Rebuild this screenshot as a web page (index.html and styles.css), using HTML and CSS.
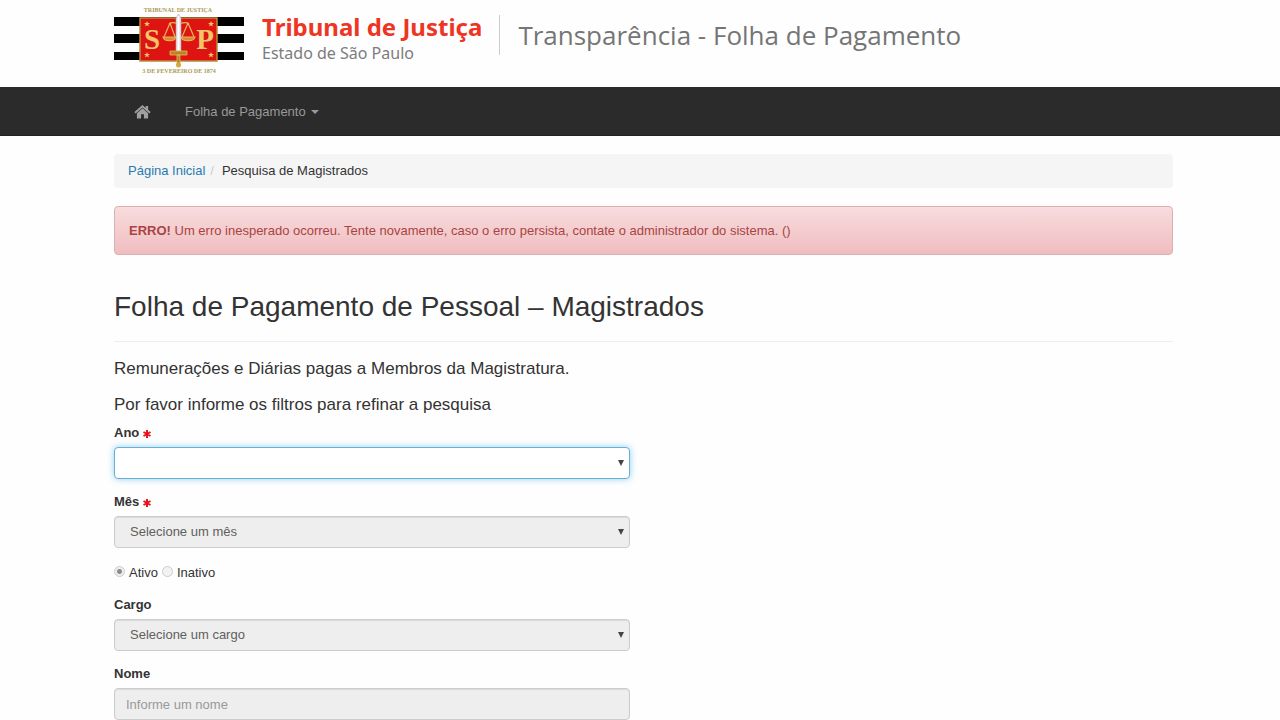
FILE: index.html
```html
<!DOCTYPE html>
<html lang="pt-BR">
<head>
<meta charset="utf-8">
<meta name="viewport" content="width=device-width, initial-scale=1">
<title>Transparência - Folha de Pagamento</title>
<link rel="stylesheet" href="styles.css">
</head>
<body>
<header class="masthead container">
  <svg class="crest" viewBox="0 0 130 72" role="img" aria-label="Tribunal de Justiça de São Paulo">
    <defs>
      <path id="star" d="M0-3 .8-.9 3-.9 1.200.5 1.900 2.600 0 1.300-1.900 2.600-1.200.5-3-.9-.8-.9z"/>
    </defs>
    <path d="M0 13h130v9H0zM0 30h130v9H0zM0 48h130v8H0z" fill="#000"/>
    <path d="M26 14h77v43H26z" fill="#dd1412" stroke="#b98a3c" stroke-width="1.500"/>
    <g fill="#f3c56a">
      <use href="#star" x="33" y="20"/><use href="#star" x="97" y="20"/>
      <use href="#star" x="33" y="51"/><use href="#star" x="97" y="51"/>
    </g>
    <g class="crest-letter" text-anchor="middle">
      <text x="38" y="45">S</text><text x="91" y="45">P</text>
    </g>
    <g fill="none" stroke="#e9b55c" stroke-width="1.200">
      <path d="M55 20c3-3 7 0 10-1 3 1 7-2 10 1M56 19l-6 14M56 19l5 14M74 19l-6 14M74 19l6 14"/>
      <path d="M49 33h13c-1 5-12 5-13 0zM67 33h14c-1 5-13 5-14 0z" fill="#d98a35"/>
    </g>
    <path d="M62 48V14l2.500-4 2.500 4v34z" fill="#e8e3e6" stroke="#b9a6a8" stroke-width=".6"/>
    <path d="M64.500 12v34" stroke="#fff" stroke-width="1.500"/>
    <path d="M56 47h17v4H56zM63 51h3v10h-3z" fill="#b98425" stroke="#e0b75a" stroke-width=".8"/>
    <circle cx="64.500" cy="61" r="2.500" fill="#d5a73f"/>
    <g class="crest-motto" text-anchor="middle">
      <text x="64" y="8">TRIBUNAL DE JUSTIÇA</text>
      <text x="65" y="69">3 DE FEVEREIRO DE 1874</text>
    </g>
  </svg>
  <div class="brand">
    <strong class="brand-name">Tribunal de Justiça</strong>
    <span class="brand-state">Estado de São Paulo</span>
  </div>
  <div class="system-name">Transparência - Folha de Pagamento</div>
</header>

<nav class="navbar" aria-label="Principal">
  <div class="container navbar-items">
    <a class="nav-link" href="#" aria-label="Página Inicial">
      <svg class="home-icon" viewBox="0 0 18 15" aria-hidden="true">
        <path d="M9 0 .3 7.600 1.600 9 9 2.600 16.400 9l1.300-1.400-2.700-2.400V1.200h-2.600v1.900z"/>
        <path d="M9 3.600 3 8.800V14.500h4.500V10h3v4.500H15V8.800z"/>
      </svg>
    </a>
    <button class="nav-link" type="button" aria-haspopup="true">Folha de Pagamento <span class="caret"></span></button>
  </div>
</nav>

<main class="container content">
  <ol class="breadcrumb">
    <li><a href="#">Página Inicial</a></li>
    <li>Pesquisa de Magistrados</li>
  </ol>
  <div class="alert" role="alert"><strong>ERRO!</strong> Um erro inesperado ocorreu. Tente novamente, caso o erro persista, contate o administrador do sistema. ()</div>
  <h1 class="page-title">Folha de Pagamento de Pessoal – Magistrados</h1>
  <p class="lead">Remunerações e Diárias pagas a Membros da Magistratura.</p>
  <p class="lead">Por favor informe os filtros para refinar a pesquisa</p>

  <form class="filters">
    <div class="field">
      <label for="ano">Ano <svg class="required" viewBox="0 0 8 8" aria-hidden="true"><path d="M4 0v8M.5 2l7 4M7.500 2l-7 4"/></svg></label>
      <div class="select-box"><select class="control focused" id="ano" required><option></option></select></div>
    </div>
    <div class="field">
      <label for="mes">Mês <svg class="required" viewBox="0 0 8 8" aria-hidden="true"><path d="M4 0v8M.5 2l7 4M7.500 2l-7 4"/></svg></label>
      <div class="select-box"><select class="control" id="mes" disabled><option>Selecione um mês</option></select></div>
    </div>
    <div class="status">
      <input type="radio" name="status" id="ativo" checked disabled><label for="ativo">Ativo</label>
      <input type="radio" name="status" id="inativo" disabled><label for="inativo">Inativo</label>
    </div>
    <div class="field">
      <label for="cargo">Cargo</label>
      <div class="select-box"><select class="control" id="cargo" disabled><option>Selecione um cargo</option></select></div>
    </div>
    <div class="field">
      <label for="nome">Nome</label>
      <input class="control" id="nome" type="text" placeholder="Informe um nome" disabled>
    </div>
  </form>
</main>
</body>
</html>
```
FILE: styles.css
```css
* { box-sizing: border-box; }

body {
  margin: 0;
  background: #fefefe;
  color: #333;
  font: 13px/18px "Liberation Sans", Arial, sans-serif;
}

.container { padding: 0 107px 0 114px; }

/* Header */
.masthead {
  display: flex;
  align-items: flex-start;
  padding-top: 4px;
  height: 87px;
}
.crest { width: 130px; height: 72px; flex: none; }
.crest-letter {
  font: bold 29px "Liberation Serif", serif;
  fill: #f3c56a;
}
.crest-motto {
  font: bold 6px "Liberation Serif", serif;
  fill: #a99a55;
}
.brand {
  display: flex;
  flex-direction: column;
  margin-left: 18px;
  padding-top: 8px;
  font-family: "Noto Sans", sans-serif;
}
.brand-name { color: #ee3524; font-size: 24px; line-height: 30px; }
.brand-state { color: #7c7c7c; font-size: 16px; line-height: 22px; }
.system-name {
  margin: 11px 0 0 17px;
  padding-left: 18px;
  border-left: 1px solid #ccc;
  color: #757575;
  font: 26px/40px "Open Sans", sans-serif;
}

/* Navigation */
.navbar { background: #2b2b2b; border-bottom: 1px solid #222; }
.navbar-items { display: flex; gap: 34px; align-items: center; height: 48px; padding-top: 2px; padding-left: 134px; }
.nav-link {
  display: flex;
  align-items: center;
  gap: 5px;
  padding: 0;
  border: 0;
  background: none;
  color: #999;
  font: inherit;
}
.home-icon { width: 17px; height: 14px; fill: #a0a0a0; }
.caret {
  border: 4px solid transparent;
  border-top-color: currentColor;
  border-bottom: 0;
}

/* Content */
.content { padding-top: 18px; }
.breadcrumb {
  display: flex;
  margin: 0 0 18px;
  padding: 8px 14px;
  border-radius: 4px;
  background: #f5f5f5;
  list-style: none;
}
.breadcrumb a { color: #2a7ab0; text-decoration: none; }
.breadcrumb li + li::before { content: "/"; padding: 0 8px 0 5px; color: #ccc; }
.alert {
  padding: 15px 14px 14px;
  border: 1px solid #dcb0b0;
  border-radius: 4px;
  background: linear-gradient(#f8dcde, #f0bdc0);
  color: #a94442;
  line-height: 18px;
}
.page-title {
  margin: 34px 0 17px;
  padding-bottom: 17px;
  border-bottom: 1px solid #eee;
  font-size: 28px;
  font-weight: normal;
  line-height: 35px;
}
.lead { margin: 0 0 16px; font-size: 17px; line-height: 20px; }

/* Filters */
.filters { max-width: 516px; margin-top: -7px; }
.field label { display: block; margin-bottom: 5px; font-weight: bold; }
.field + .field, .status + .field { margin-top: 14px; }
.required { width: 8px; height: 8px; vertical-align: -1px; stroke: #e8101a; stroke-width: 2; }
.select-box { display: grid; align-items: center; }
.select-box > *, .select-box::after { grid-area: 1 / 1; }
.select-box::after {
  content: "";
  justify-self: end;
  margin-right: 6px;
  border: 3px solid transparent;
  border-top: 6px solid #444;
  border-bottom: 0;
  pointer-events: none;
}
.control {
  appearance: none;
  display: block;
  width: 100%;
  height: 32px;
  margin: 0;
  padding: 0 11px;
  border: 1px solid #ccc;
  border-radius: 4px;
  outline: 0;
  background: #eee;
  box-shadow: inset 0 1px 1px rgba(0, 0, 0, .08);
  color: #606060;
  font: inherit;
  opacity: 1;
}
select.control { padding: 0 15px; }
.control::placeholder { color: #999; }
.control.focused {
  border-color: #66afd9;
  background: #fff;
  box-shadow: 0 0 7px rgba(102, 190, 233, .7);
}
.status { display: flex; align-items: center; gap: 4px; margin-top: 16px; }
.status input {
  appearance: none;
  width: 11px;
  height: 11px;
  margin: 0 0 4px;
  border: 1px solid #ccc;
  border-radius: 50%;
  background: #f2f2f2;
}
.status input:checked { background: radial-gradient(circle, #8c8c8c 2px, #eee 3px); }
```
